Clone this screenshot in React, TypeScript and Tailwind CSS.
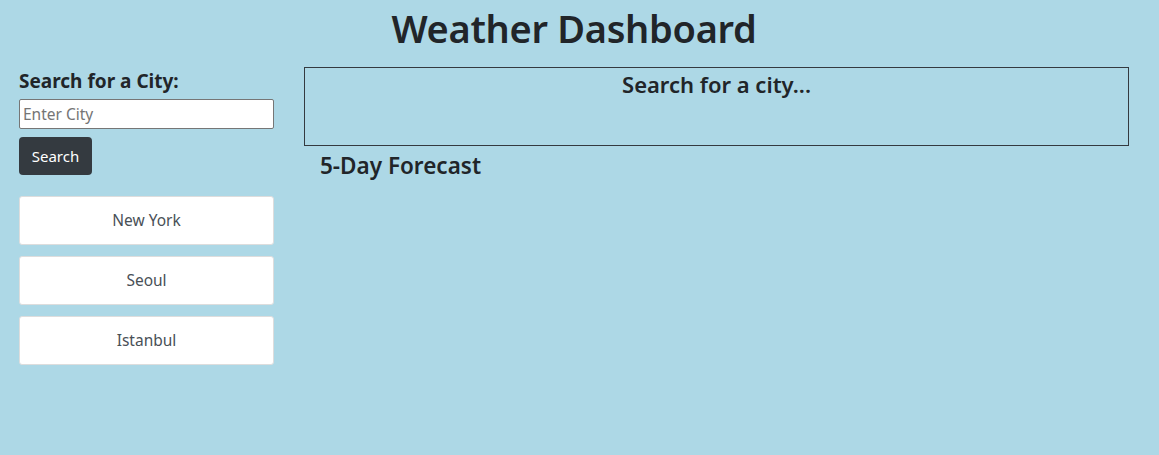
import React from "react";

export default function App() {
  const cities = ["New York", "Seoul", "Istanbul"];
  return (
    <div
      className="min-h-[455px] w-full bg-[#add8e6] text-[#212529]"
      style={{ fontFamily: '"Noto Sans", "Open Sans", sans-serif' }}
    >
      <h1 className="pt-[4px] pr-[11px] text-center text-[38px] font-semibold leading-[48px] tracking-[-0.3px]">
        Weather Dashboard
      </h1>
      <div className="mt-[15px] flex pl-[19px] pr-[30px]">
        <div className="flex w-[255px] shrink-0 flex-col">
          <h5 className="mt-[2px] text-[19px] font-bold leading-[24px]">Search for a City:</h5>
          <input
            className="mt-[6px] h-[30px] w-[255px] rounded-[2px] border border-[#767676] bg-white px-[3px] text-[15.5px] outline-none placeholder:text-[#757575]"
            placeholder="Enter City"
          />
          <button className="mt-[8px] h-[38px] w-[73px] rounded-[4px] bg-[#343a40] text-[15px] text-white">
            Search
          </button>
          <div className="mt-[21px] flex flex-col gap-[11px]">
            {cities.map((c) => (
              <button
                key={c}
                className="h-[49px] w-[255px] rounded-[3px] border border-[#dddddd] bg-white text-[15.5px] text-[#495057]"
              >
                {c}
              </button>
            ))}
          </div>
        </div>
        <div className="ml-[30px] flex flex-1 flex-col">
          <div className="h-[79px] border border-[#343a40] pt-[2px] text-center">
            <h4 className="text-[22px] font-semibold leading-[28px]">Search for a city...</h4>
          </div>
          <h4 className="ml-[16px] mt-[6px] text-[22.5px] font-semibold leading-[28px]">5-Day Forecast</h4>
        </div>
      </div>
    </div>
  );
}
